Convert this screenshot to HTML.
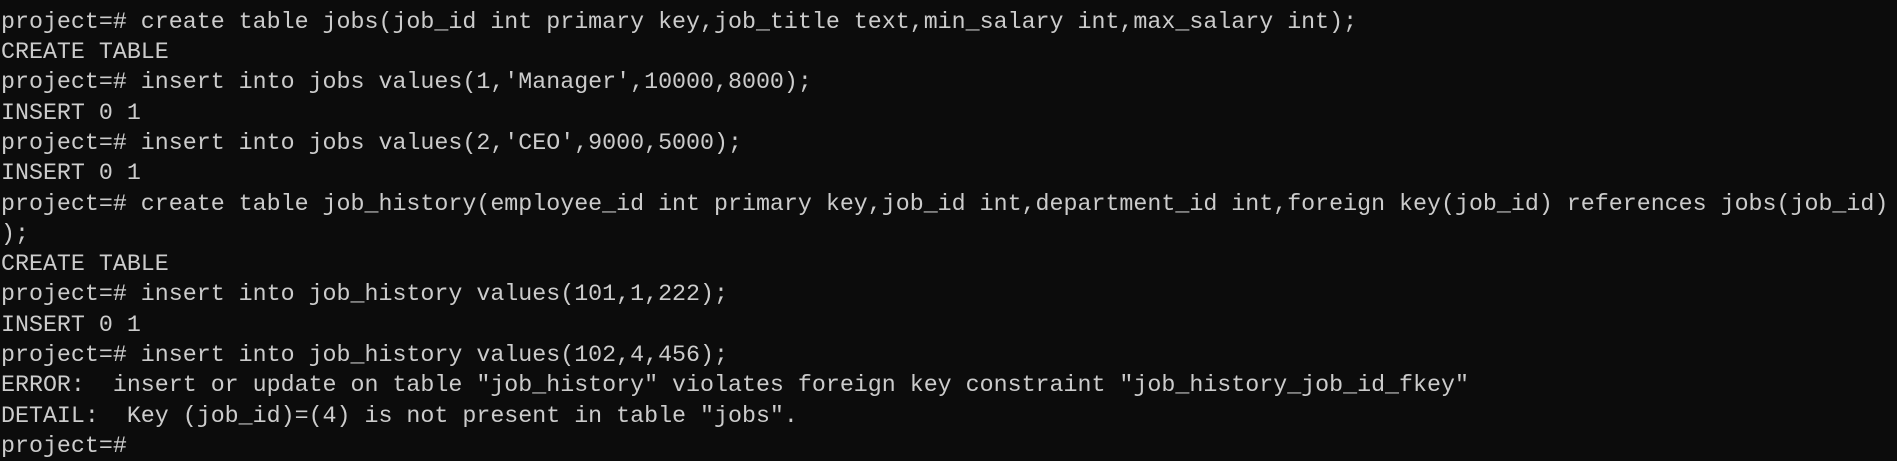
<!DOCTYPE html>
<html><head><style>
html,body{margin:0;padding:0;background:#0c0c0c;width:1897px;height:457px;overflow:hidden}
pre{position:absolute;left:1px;top:-23.5px;margin:0;font-family:"Liberation Mono",monospace;font-size:23.3px;line-height:30.3px;color:#cccccc;white-space:pre;width:3000px}
</style></head><body><pre>DROP TABLE
project=# create table jobs(job_id int primary key,job_title text,min_salary int,max_salary int);
CREATE TABLE
project=# insert into jobs values(1,'Manager',10000,8000);
INSERT 0 1
project=# insert into jobs values(2,'CEO',9000,5000);
INSERT 0 1
project=# create table job_history(employee_id int primary key,job_id int,department_id int,foreign key(job_id) references jobs(job_id)
);
CREATE TABLE
project=# insert into job_history values(101,1,222);
INSERT 0 1
project=# insert into job_history values(102,4,456);
ERROR:  insert or update on table "job_history" violates foreign key constraint "job_history_job_id_fkey"
DETAIL:  Key (job_id)=(4) is not present in table "jobs".
project=#</pre></body></html>
